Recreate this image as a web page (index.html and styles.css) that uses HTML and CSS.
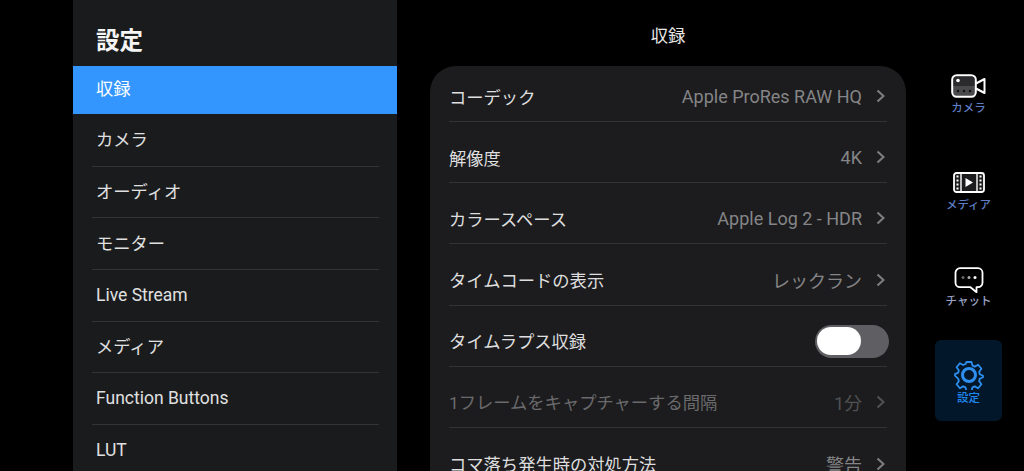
FILE: index.html
```html
<!DOCTYPE html>
<html lang="ja">
<head>
    <meta charset="UTF-8">
    <meta name="viewport" content="width=device-width, initial-scale=1.0">
    <title>設定</title>
    <link rel="stylesheet" href="styles.css">
</head>
<body>
    <div class="app">
        <div class="sidebar">
            <h1>設定</h1>
            <ul class="menu">
                <li class="active">収録</li>
                <li>カメラ</li>
                <li>オーディオ</li>
                <li>モニター</li>
                <li class="latin">Live Stream</li>
                <li>メディア</li>
                <li class="latin">Function Buttons</li>
                <li class="latin">LUT</li>
            </ul>
        </div>

        <div class="main">
            <h2>収録</h2>
            <div class="panel">
                <div class="row">
                    <span>コーデック</span>
                    <span class="value">Apple ProRes RAW HQ</span>
                    <svg class="chev" viewBox="0 0 9 14"><path d="M1.5 1.5l6 5.500-6 5.500"/></svg>
                </div>
                <div class="row">
                    <span>解像度</span>
                    <span class="value">4K</span>
                    <svg class="chev" viewBox="0 0 9 14"><path d="M1.5 1.5l6 5.500-6 5.500"/></svg>
                </div>
                <div class="row">
                    <span>カラースペース</span>
                    <span class="value">Apple Log 2 - HDR</span>
                    <svg class="chev" viewBox="0 0 9 14"><path d="M1.5 1.5l6 5.500-6 5.500"/></svg>
                </div>
                <div class="row">
                    <span>タイムコードの表示</span>
                    <span class="value">レックラン</span>
                    <svg class="chev" viewBox="0 0 9 14"><path d="M1.5 1.5l6 5.500-6 5.500"/></svg>
                </div>
                <div class="row">
                    <span>タイムラプス収録</span>
                    <span class="toggle"><span class="knob"></span></span>
                </div>
                <div class="row disabled">
                    <span>1フレームをキャプチャーする間隔</span>
                    <span class="value">1分</span>
                    <svg class="chev" viewBox="0 0 9 14"><path d="M1.5 1.5l6 5.500-6 5.500"/></svg>
                </div>
                <div class="row">
                    <span>コマ落ち発生時の対処方法</span>
                    <span class="value">警告</span>
                    <svg class="chev" viewBox="0 0 9 14"><path d="M1.5 1.5l6 5.500-6 5.500"/></svg>
                </div>
            </div>
        </div>

        <div class="rail">
            <div class="tab tab-camera">
                <svg width="36" height="24" viewBox="0 0 36 24">
                    <rect x="1.2" y="1.2" width="23.6" height="21.6" rx="4.5" fill="#4a4a4c" stroke="#fff" stroke-width="2"/>
                    <path d="M2.5 5.5a3 3 0 0 1 3-3h15a3 3 0 0 1 3 3V12h-21z" fill="#2b2b2d"/>
                    <circle cx="7" cy="6.500" r="1.800" fill="#fff"/>
                    <circle cx="7" cy="17" r="1.200" fill="#111"/>
                    <circle cx="13" cy="17" r="1.200" fill="#111"/>
                    <circle cx="19" cy="17" r="1.200" fill="#111"/>
                    <path d="M25 9.500l8.500-4.500v14l-8.500-4.500" fill="none" stroke="#fff" stroke-width="2" stroke-linejoin="round"/>
                </svg>
                <span>カメラ</span>
            </div>
            <div class="tab tab-media">
                <svg width="32" height="21" viewBox="0 0 32 21">
                    <rect x="1" y="1" width="30" height="19" rx="2.500" fill="#1c1c1e" stroke="#fff" stroke-width="1.800"/>
                    <path d="M8 1v19M24 1v19" stroke="#fff" stroke-width="1.400"/>
                    <path d="M3.500 4.500h2M3.500 8.500h2M3.500 12.500h2M3.500 16.500h2M26.500 4.500h2M26.500 8.500h2M26.500 12.500h2M26.500 16.500h2" stroke="#fff" stroke-width="2"/>
                    <path d="M12.500 6l7.500 4.500-7.500 4.500z" fill="#fff"/>
                </svg>
                <span>メディア</span>
            </div>
            <div class="tab tab-chat">
                <svg width="30" height="27" viewBox="0 0 30 27">
                    <path d="M6 1.200h18a4.500 4.500 0 0 1 4.500 4.500v10a4.500 4.500 0 0 1-4.500 4.500h-1.500v5l-6-5H6a4.500 4.500 0 0 1-4.500-4.500v-10A4.500 4.500 0 0 1 6 1.200z" fill="#000" stroke="#fff" stroke-width="1.800" stroke-linejoin="round"/>
                    <circle cx="9" cy="10.500" r="1.500" fill="#666"/>
                    <circle cx="15" cy="10.500" r="1.500" fill="#aaa"/>
                    <circle cx="21" cy="10.500" r="1.500" fill="#fff"/>
                </svg>
                <span>チャット</span>
            </div>
            <div class="tab tab-settings">
                <svg width="30" height="30" viewBox="0 0 30 30" fill="none" stroke="#2d8ff0">
                    <path stroke-width="1.800" stroke-linejoin="round" d="M12.500 2h5l1 3.600 2.300 1 3.300-1.800 3.300 4-2.200 3 .5 2.400 3.300 1.500v1.600l-3.300 1.500-.5 2.400 2.200 3-3.300 4-3.300-1.800-2.300 1-1 3.600h-5l-1-3.600-2.300-1-3.300 1.800-3.300-4 2.200-3-.5-2.400L1 15.700v-1.600l3.300-1.500.5-2.400-2.200-3 3.300-4 3.300 1.800 2.300-1z"/>
                    <circle cx="15" cy="15" r="6.500" stroke-width="3"/>
                </svg>
                <span>設定</span>
            </div>
        </div>
    </div>
</body>
</html>
```

FILE: styles.css
```css
html, body {
    height: 100%;
}

body {
    margin: 0;
    background-color: #000;
    color: #e6e6e6;
    font-family: Roboto, "Noto Sans CJK JP", sans-serif;
    overflow: hidden;
}

.app {
    display: flex;
    height: 471px;
    overflow: hidden;
    padding-left: 73px;
    box-sizing: border-box;
}

/* left settings list */
.sidebar {
    width: 324px;
    flex-shrink: 0;
    background-color: #1a1b1d;
}

.sidebar h1 {
    margin: 0;
    height: 66px;
    padding: 24px 0 0 23px;
    box-sizing: border-box;
    font-size: 23.5px;
    line-height: 34px;
    font-weight: 700;
    color: #f4f4f4;
}

.menu {
    list-style-type: none;
    margin: 0;
    padding: 0;
}

.menu li {
    position: relative;
    height: 51.7px;
    padding: 0 0 2px 23px;
    box-sizing: border-box;
    display: flex;
    align-items: center;
    font-size: 17.3px;
    color: #e0e0e0;
}

.menu li.latin {
    padding-bottom: 0;
    font-size: 17.5px;
}

.menu li::after {
    content: "";
    position: absolute;
    left: 19px;
    right: 18px;
    bottom: -1px;
    height: 1px;
    background-color: #333436;
}

.menu li.active {
    height: 48px;
    padding-bottom: 5px;
    background-color: #3396ff;
    color: #fff;
}

.menu li.active::after {
    display: none;
}

/* center panel */
.main {
    width: 476px;
    margin-left: 33px;
    flex-shrink: 0;
}

.main h2 {
    margin: 0;
    height: 66px;
    padding-top: 24px;
    box-sizing: border-box;
    text-align: center;
    font-size: 17.3px;
    line-height: 24px;
    font-weight: 400;
    color: #e8e8e8;
}

.panel {
    background-color: #1c1c1e;
    border-radius: 26px 26px 0 0;
    padding: 0 19px;
    height: 405px;
    overflow: hidden;
}

.row {
    height: 61.2px;
    padding-top: 10.2px;
    box-sizing: border-box;
    display: flex;
    align-items: center;
    border-bottom: 1px solid #333335;
    font-size: 17.3px;
    color: #dedede;
}

.row:first-child {
    height: 56px;
    padding-top: 5.4px;
}

.row:last-child {
    border-bottom: none;
}

.row .value {
    margin-left: auto;
    font-size: 18px;
    color: #858587;
}

.chev {
    width: 9px;
    height: 14px;
    margin: 0 2px 0 14px;
    fill: none;
    stroke: #7c7c7e;
    stroke-width: 2.2;
}

.row.disabled {
    color: #6a6a6c;
}

.row.disabled .value {
    color: #505052;
}

.row.disabled .chev {
    stroke: #505052;
}

.toggle {
    margin: 1px -2px 0 auto;
    width: 74px;
    height: 33px;
    border-radius: 17px;
    background-color: #5f5f63;
    display: flex;
    align-items: center;
    padding-left: 2px;
    box-sizing: border-box;
}

.knob {
    width: 44px;
    height: 28px;
    border-radius: 14px;
    background-color: #fff;
}

/* right icon rail */
.rail {
    width: 67px;
    margin-left: 29px;
    flex-shrink: 0;
    position: relative;
    height: 100%;
}

.tab {
    position: absolute;
    left: 0;
    width: 67px;
    display: flex;
    flex-direction: column;
    align-items: center;
    gap: 3px;
    font-size: 11.5px;
    line-height: 15px;
    font-weight: 500;
    color: #5f7dc4;
}

.tab-camera { top: 74px; }
.tab-media { top: 172px; gap: 5px; }
.tab-chat { top: 267px; gap: 0; color: #9aa0c4; }

.tab-settings {
    top: 340px;
    height: 81px;
    padding-top: 20px;
    box-sizing: border-box;
    border-radius: 6px;
    background-color: #03172a;
    color: #1f86ee;
    gap: 1px;
}
```
